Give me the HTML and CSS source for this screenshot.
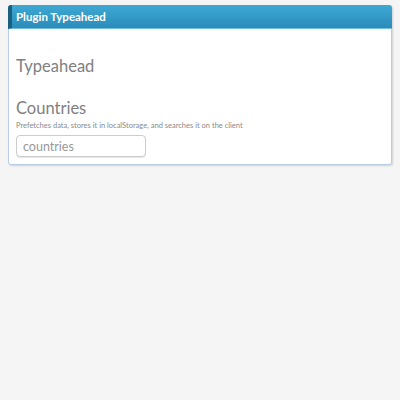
FILE: index.html
```html
<!DOCTYPE html>
<html>
<head>
<meta charset="utf-8">
<link rel="stylesheet" href="styles.css">
</head>
<body>
<div class="panel">
  <div class="panel-head">Plugin Typeahead</div>
  <div class="panel-body">
    <h2 class="title">Typeahead</h2>
    <h3 class="subtitle">Countries</h3>
    <p class="desc">Prefetches data, stores it in localStorage, and searches it on the client</p>
    <input class="field" type="text" placeholder="countries">
  </div>
</div>
</body>
</html>
```
FILE: styles.css
```css
html, body { margin: 0; padding: 0; }
body {
  background: #f5f5f5;
  font-family: Lato, "Noto Sans", sans-serif;
  padding: 5px 8px;
}
.panel {
  background: #fff;
  border: 1px solid #b9cde6;
  border-radius: 3px;
  box-shadow: 1px 1px 2px rgba(0,0,0,0.15);
}
.panel-head {
  height: 23px;
  line-height: 23px;
  margin: -1px -1px 0 -1px;
  background: linear-gradient(#3ea8d3, #2b8cba);
  border-left: 4px solid #1b5f7f;
  border-bottom: 1px solid #6fbde0;
  color: #fff;
  font-weight: 700;
  font-size: 11.5px;
  padding-left: 4px;
  border-radius: 3px 3px 0 0;
}
.panel-body { padding: 0 7px 7px 7px; }
.title {
  margin: 26px 0 0 0;
  font-weight: 400;
  font-size: 16.5px;
  line-height: 22px;
  color: #808080;
}
.subtitle {
  margin: 20px 0 0 0;
  font-weight: 400;
  font-size: 16.5px;
  line-height: 22px;
  color: #808080;
}
.desc {
  margin: 2px 0 0 0;
  font-size: 7.5px;
  line-height: 10px;
  color: #8a8a8a;
}
.field {
  display: block;
  margin-top: 4px;
  width: 130px;
  height: 22px;
  box-sizing: border-box;
  border: 1px solid #ccc;
  border-radius: 4px;
  box-shadow: 0 1px 1px rgba(0,0,0,0.1);
  padding: 0 6px;
  font-family: Lato, "Noto Sans", sans-serif;
  font-size: 12.5px;
  color: #999;
}
.field::placeholder { color: #999; }
```
